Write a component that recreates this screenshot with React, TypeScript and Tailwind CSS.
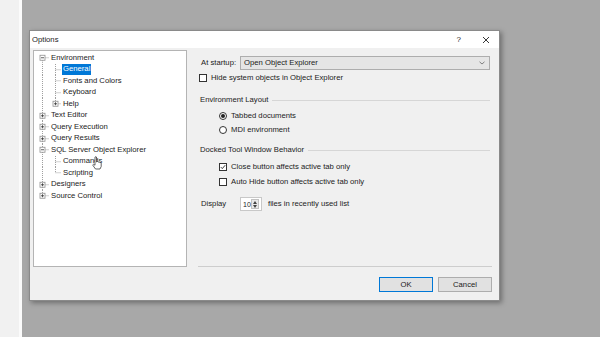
import React from 'react';

type Line = 'full' | 'top' | 'bottom';

interface TreeRow {
  label: string;
  level: 0 | 1;
  box?: 'plus' | 'minus';
  root: Line;
  child?: Line;
  selected?: boolean;
}

const rows: TreeRow[] = [
  { label: 'Environment', level: 0, box: 'minus', root: 'bottom' },
  { label: 'General', level: 1, root: 'full', child: 'full', selected: true },
  { label: 'Fonts and Colors', level: 1, root: 'full', child: 'full' },
  { label: 'Keyboard', level: 1, root: 'full', child: 'full' },
  { label: 'Help', level: 1, box: 'plus', root: 'full', child: 'top' },
  { label: 'Text Editor', level: 0, box: 'plus', root: 'full' },
  { label: 'Query Execution', level: 0, box: 'plus', root: 'full' },
  { label: 'Query Results', level: 0, box: 'plus', root: 'full' },
  { label: 'SQL Server Object Explorer', level: 0, box: 'minus', root: 'full' },
  { label: 'Commands', level: 1, root: 'full', child: 'full' },
  { label: 'Scripting', level: 1, root: 'full', child: 'top' },
  { label: 'Designers', level: 0, box: 'plus', root: 'full' },
  { label: 'Source Control', level: 0, box: 'plus', root: 'top' },
];

const H = 11.5;

const vLine = (x: number, kind: Line, key: string) => {
  const y1 = kind === 'bottom' ? H / 2 : 0;
  const y2 = kind === 'top' ? H / 2 : H;
  return <line key={key} x1={x} y1={y1} x2={x} y2={y2} stroke="#a0a0a0" strokeDasharray="1 1" />;
};

const Expander = ({ cx, kind }: { cx: number; kind: 'plus' | 'minus' }) => (
  <g>
    <rect x={cx - 2.5} y={H / 2 - 2.5} width={5} height={5} fill="#fff" stroke="#8f8f8f" strokeWidth={0.8} />
    <line x1={cx - 1.5} y1={H / 2} x2={cx + 1.5} y2={H / 2} stroke="#333" strokeWidth={0.8} />
    {kind === 'plus' && <line x1={cx} y1={H / 2 - 1.5} x2={cx} y2={H / 2 + 1.5} stroke="#333" strokeWidth={0.8} />}
  </g>
);

const Gutter = ({ row }: { row: TreeRow }) => {
  const w = row.level === 0 ? 16 : 28;
  return (
    <svg width={w} height={H} className="shrink-0">
      {vLine(8.5, row.root, 'r')}
      {row.level === 0 && <line x1={8.5} y1={H / 2} x2={15} y2={H / 2} stroke="#a0a0a0" strokeDasharray="1 1" />}
      {row.level === 1 && row.child && vLine(21.5, row.child, 'c')}
      {row.level === 1 && <line x1={21.5} y1={H / 2} x2={27} y2={H / 2} stroke="#a0a0a0" strokeDasharray="1 1" />}
      {row.level === 0 && row.box && <Expander cx={8.5} kind={row.box} />}
      {row.level === 1 && row.box && <Expander cx={21.5} kind={row.box} />}
    </svg>
  );
};

const CheckBox = ({ checked }: { checked?: boolean }) => (
  <span className="w-[8px] h-[8px] border border-[#333] bg-white shrink-0 flex items-center justify-center">
    {checked && (
      <svg width="6" height="6" viewBox="0 0 6 6">
        <path d="M0.8 3.1 L2.3 4.6 L5.2 1.2" fill="none" stroke="#222" strokeWidth="0.9" />
      </svg>
    )}
  </span>
);

const Radio = ({ checked }: { checked?: boolean }) => (
  <span className="w-[8px] h-[8px] rounded-full border border-[#333] bg-white shrink-0 flex items-center justify-center">
    {checked && <span className="w-[4px] h-[4px] rounded-full bg-[#222]" />}
  </span>
);

const GroupHeader = ({ title }: { title: string }) => (
  <div className="flex items-center h-[12px] pl-[2px] pr-[2px] gap-[4px]">
    <span>{title}</span>
    <span className="flex-1 h-px bg-[#d6d6d6]" />
  </div>
);

export default function App() {
  return (
    <div
      className="w-[600px] h-[337px] overflow-hidden flex bg-[#a8a8a8] text-[7.7px] text-[#1b1b1b] leading-none"
      style={{ fontFamily: '"Liberation Sans", Arial, sans-serif' }}
    >
      {/* left strip of the window behind */}
      <div className="w-[22px] bg-[#f1f1f1] border-r-[3px] border-[#fbfbfb] shrink-0" />

      <div className="pt-[30px] pl-[7px] relative">
        <div className="w-[471px] h-[271px] flex flex-col bg-[#f0f0f0] border border-[#8a8a8a] shadow-[2px_2px_5px_rgba(0,0,0,0.35)]">
          {/* title bar */}
          <div className="h-[17px] bg-white flex items-center pl-[2px] pr-[9px] shrink-0">
            <span>Options</span>
            <span className="ml-auto text-[8px] mr-[21px]">?</span>
            <svg width="8" height="8" viewBox="0 0 8 8">
              <path d="M1 1 L7 7 M7 1 L1 7" stroke="#222" strokeWidth="0.9" />
            </svg>
          </div>

          <div className="flex pt-[2px] pl-[3px] pr-[7px]">
            {/* tree */}
            <div className="w-[154px] h-[217px] bg-white border border-[#b4b4b4] pt-[1px] shrink-0">
              {rows.map((r) => (
                <div key={r.label} className="flex items-center h-[11.5px]">
                  <Gutter row={r} />
                  <span className={r.selected ? 'bg-[#0078d7] text-white px-[1px] py-[1.5px]' : 'px-[1px]'}>{r.label}</span>
                </div>
              ))}
            </div>

            {/* settings */}
            <div className="ml-[11px] flex-1 h-[217px] flex flex-col border-b border-[#cdcdcd]">
              <div className="mt-[6px] flex items-center h-[14px] pl-[3px] pr-[2px]">
                <span className="w-[39px] shrink-0">At startup:</span>
                <div className="flex-1 h-[14px] bg-[#e5e5e5] border border-[#adadad] flex items-center pl-[3px] pr-[4px]">
                  <span>Open Object Explorer</span>
                  <svg className="ml-auto" width="6" height="4" viewBox="0 0 6 4">
                    <path d="M0.5 0.8 L3 3 L5.5 0.8" fill="none" stroke="#666" strokeWidth="0.8" />
                  </svg>
                </div>
              </div>

              <div className="mt-[2px] flex items-center h-[12px] pl-[1px] gap-[4px]">
                <CheckBox />
                <span>Hide system objects in Object Explorer</span>
              </div>

              <div className="mt-[10px]">
                <GroupHeader title="Environment Layout" />
              </div>
              <div className="mt-[4px] flex items-center h-[12px] pl-[21px] gap-[4px]">
                <Radio checked />
                <span>Tabbed documents</span>
              </div>
              <div className="mt-[2px] flex items-center h-[12px] pl-[21px] gap-[4px]">
                <Radio />
                <span>MDI environment</span>
              </div>

              <div className="mt-[8px]">
                <GroupHeader title="Docked Tool Window Behavior" />
              </div>
              <div className="mt-[5px] flex items-center h-[12px] pl-[21px] gap-[4px]">
                <CheckBox checked />
                <span>Close button affects active tab only</span>
              </div>
              <div className="mt-[3px] flex items-center h-[12px] pl-[21px] gap-[4px]">
                <CheckBox />
                <span>Auto Hide button affects active tab only</span>
              </div>

              <div className="mt-[9px] flex items-center h-[14px] pl-[3px]">
                <span className="w-[39px] shrink-0">Display</span>
                <div className="w-[22px] h-[14px] bg-white border border-[#c8c8c8] flex items-center pl-[2px]">
                  <span className="text-[7px]">10</span>
                  <div className="ml-auto mr-[2px] w-[8px] h-[10px] bg-[#e9e9e9] border border-[#c2c2c2] flex flex-col items-center justify-center gap-[1px]">
                    <svg width="4" height="3" viewBox="0 0 4 3">
                      <path d="M0 3 L2 0 L4 3 Z" fill="#444" />
                    </svg>
                    <svg width="4" height="3" viewBox="0 0 4 3">
                      <path d="M0 0 L2 3 L4 0 Z" fill="#444" />
                    </svg>
                  </div>
                </div>
                <span className="ml-[6px]">files in recently used list</span>
              </div>
            </div>
          </div>

          {/* buttons */}
          <div className="mt-[10px] flex justify-end gap-[5px] pr-[7px]">
            <button className="w-[54px] h-[15px] bg-[#e1e1e1] border border-[#0078d7]">OK</button>
            <button className="w-[54px] h-[15px] bg-[#e1e1e1] border border-[#adadad]">Cancel</button>
          </div>
        </div>

        {/* mouse pointer over "Commands" */}
        <svg className="absolute left-[70px] top-[156px]" width="10" height="14" viewBox="0 0 10 14">
          <path
            d="M3 1 Q3.8 0.4 4.5 1 L4.5 6 L5 5.6 Q5.8 5.2 6.4 5.8 L6.6 6.2 Q7.4 5.8 8 6.5 Q8.8 6.4 9.2 7.2 L9.2 10.5 L8 13 L3.5 13 L1 9.5 Q0.6 8.6 1.4 8.3 L3 9.2 Z"
            fill="#fff"
            stroke="#222"
            strokeWidth="0.7"
          />
        </svg>
      </div>
    </div>
  );
}
